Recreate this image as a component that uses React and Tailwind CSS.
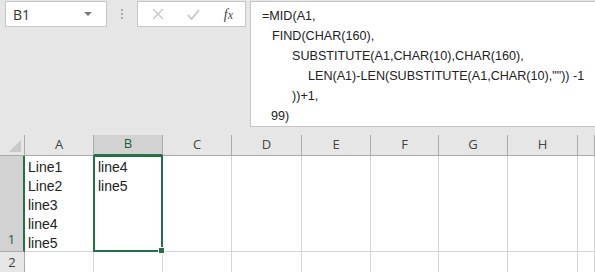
import React from "react";

const cols = ["A", "B", "C", "D", "E", "F", "G", "H", ""];

const formulaLines = [
  { pad: "pl-0", text: "=MID(A1," },
  { pad: "pl-[10px]", text: "FIND(CHAR(160)," },
  { pad: "pl-[30px]", text: "SUBSTITUTE(A1,CHAR(10),CHAR(160)," },
  { pad: "pl-[46px]", text: 'LEN(A1)-LEN(SUBSTITUTE(A1,CHAR(10),"")) -1' },
  { pad: "pl-[30px]", text: "))+1," },
  { pad: "pl-[9px]", text: "99)" },
];

function NameBox() {
  return (
    <div className="shrink-0 ml-[5px] mt-[1px] w-[102px] h-[26px] bg-white border border-[#c6c6c6] flex items-center pl-[7px] pr-[14px]">
      <span className="text-[14px] text-[#333] font-['Open_Sans',sans-serif]">B1</span>
      <svg width="8" height="5" viewBox="0 0 8 5" className="ml-auto">
        <path d="M0 0 L8 0 L4 4 Z" fill="#777" />
      </svg>
    </div>
  );
}

function FormulaButtons() {
  return (
    <div className="shrink-0 mt-[1px] w-[109px] h-[26px] bg-white border border-[#c6c6c6] flex items-center pl-[14px] pr-[12px]">
      <svg width="12" height="12" viewBox="0 0 12 12">
        <path d="M1 1 L11 11 M11 1 L1 11" stroke="#c6c6c6" strokeWidth="1.4" />
      </svg>
      <svg width="13" height="11" viewBox="0 0 13 11" className="ml-[23px]">
        <path d="M1 6 L4.5 10 L12 1" stroke="#c6c6c6" strokeWidth="1.8" fill="none" />
      </svg>
      <span className="ml-auto text-[14px] italic text-[#444] font-['Liberation_Serif',serif]">
        f<span className="text-[12px]">x</span>
      </span>
    </div>
  );
}

export default function App() {
  return (
    <div className="w-[595px] h-[272px] bg-[#e6e6e6] overflow-hidden flex flex-col font-['Liberation_Sans',sans-serif]">
      {/* formula bar area */}
      <div className="h-[136px] flex items-start">
        <NameBox />
        <div className="shrink-0 w-[30px] h-[28px] flex flex-col items-center justify-center gap-[2px]">
          <span className="w-[2px] h-[2px] bg-[#aaa]" />
          <span className="w-[2px] h-[2px] bg-[#aaa]" />
          <span className="w-[2px] h-[2px] bg-[#aaa]" />
        </div>
        <FormulaButtons />
        <div className="ml-[4px] mt-[1px] flex-1 min-w-0 h-[126px] bg-white border border-[#c6c6c6] border-r-0 pl-[11px] pt-[4px] text-[12.6px] leading-[20px] text-[#222] overflow-hidden">
          {formulaLines.map((l, i) => (
            <div key={i} className={`${l.pad} whitespace-pre`}>{l.text}</div>
          ))}
        </div>
      </div>

      {/* sheet */}
      <div className="flex-1 grid grid-cols-[25px_69px_69px_69px_70px_69px_68px_69px_70px_1fr] grid-rows-[21px_96px_1fr] bg-white text-[14px] text-[#222]">
        {/* corner */}
        <div className="bg-[#e6e6e6] border-r border-b border-[#ababab] flex items-end justify-end pr-[3px] pb-[3px]">
          <svg width="12" height="12" viewBox="0 0 12 12">
            <path d="M12 0 L12 12 L0 12 Z" fill="#c8c8c8" />
          </svg>
        </div>
        {cols.map((c, i) => (
          <div
            key={i}
            className={
              c === "B"
                ? "bg-[#d2d2d2] border-r border-[#ababab] border-b-2 border-b-[#217346] flex items-center justify-center text-[13px] text-[#1e5e3b] font-['Open_Sans',sans-serif]"
                : "bg-[#e6e6e6] border-r border-b border-[#ababab] flex items-center justify-center text-[13px] text-[#444] font-['Open_Sans',sans-serif]"
            }
          >
            {c}
          </div>
        ))}

        {/* row 1 */}
        <div className="bg-[#d2d2d2] border-r-2 border-r-[#217346] border-b border-[#ababab] flex items-end justify-center pb-[1px] text-[13px] text-[#1e5e3b] font-['Open_Sans',sans-serif]">
          1
        </div>
        <div className="border-r border-b border-[#d4d4d4] pl-[3px] pt-[2px] leading-[19px]">
          <div>Line1</div>
          <div>Line2</div>
          <div>line3</div>
          <div>line4</div>
          <div>line5</div>
        </div>
        <div className="relative border-r border-b border-[#d4d4d4] pl-[4px] pt-[2px] leading-[19px]">
          <div>line4</div>
          <div>line5</div>
          <div className="absolute -left-[1px] -top-[1px] -right-[1px] -bottom-[1px] border-2 border-[#217346]" />
          <div className="absolute -right-[3px] -bottom-[3px] w-[5px] h-[5px] bg-[#217346] border border-white box-content" />
        </div>
        {cols.slice(2).map((c, i) => (
          <div key={i} className="border-r border-b border-[#d4d4d4]" />
        ))}

        {/* row 2 */}
        <div className="bg-[#e6e6e6] border-r border-[#ababab] flex items-start justify-center pt-[1px] text-[13px] text-[#444] font-['Open_Sans',sans-serif]">
          2
        </div>
        {cols.map((c, i) => (
          <div key={i} className="border-r border-[#d4d4d4]" />
        ))}
      </div>
    </div>
  );
}
